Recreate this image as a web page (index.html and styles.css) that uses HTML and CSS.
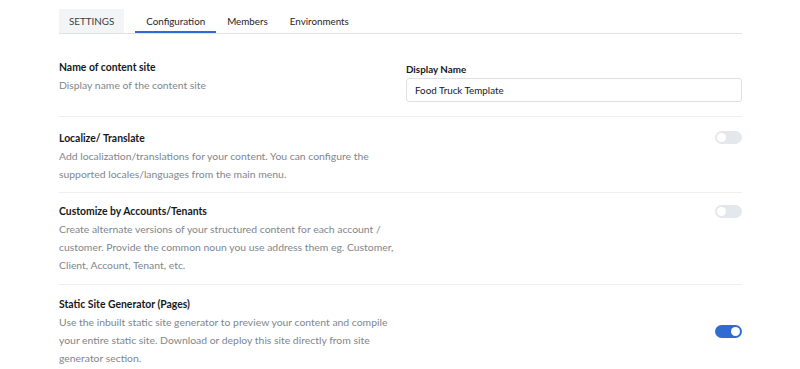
FILE: index.html
```html
<!DOCTYPE html>
<html>
  <head>
    <title>Settings</title>
    <link rel="stylesheet" href="styles.css">
  </head>
  <body>
    <div class="container">
      <div class="tabs">
        <div class="tab-label">SETTINGS</div>
        <div class="tab active">Configuration</div>
        <div class="tab">Members</div>
        <div class="tab">Environments</div>
      </div>

      <div class="setting first">
        <div class="setting-text">
          <div class="setting-title">Name of content site</div>
          <div class="setting-desc">Display name of the content site</div>
        </div>
        <div class="field">
          <label class="field-label">Display Name</label>
          <input type="text" class="field-input" value="Food Truck Template" />
        </div>
      </div>

      <div class="setting spaced">
        <div class="setting-text">
          <div class="setting-title">Localize/ Translate</div>
          <div class="setting-desc">
            Add localization/translations for your content. You can configure the
            supported locales/languages from the main menu.
          </div>
        </div>
        <div class="switch"></div>
      </div>

      <div class="setting">
        <div class="setting-text">
          <div class="setting-title">Customize by Accounts/Tenants</div>
          <div class="setting-desc">
            Create alternate versions of your structured content for each account /
            customer. Provide the common noun you use address them eg. Customer,
            Client, Account, Tenant, etc.
          </div>
        </div>
        <div class="switch"></div>
      </div>

      <div class="setting last">
        <div class="setting-text">
          <div class="setting-title">Static Site Generator (Pages)</div>
          <div class="setting-desc">
            Use the inbuilt static site generator to preview your content and compile
            your entire static site. Download or deploy this site directly from site
            generator section.
          </div>
        </div>
        <div class="switch on"></div>
      </div>
    </div>
  </body>
</html>
```

FILE: styles.css
```css
body {
  font-family: Lato, "Open Sans", Arial, sans-serif;
  background-color: #fff;
  margin: 0;
  padding: 0;
}
.container {
  width: 683px;
  margin-left: 59px;
}
.tabs {
  display: flex;
  margin-top: 9px;
  border-bottom: 1px solid #dfe3e8;
  font-size: 9.8px;
  color: #1f2328;
}
.tab-label {
  padding: 0 10px;
  height: 24px;
  line-height: 24px;
  background-color: #f3f4f6;
  color: #3a3f45;
  margin-right: 11px;
}
.tab {
  padding: 0 11px;
  height: 24px;
  line-height: 24px;
}
.tab.active {
  box-shadow: inset 0 -2px 0 #2f6bd0;
}
.setting {
  display: flex;
  align-items: flex-start;
  justify-content: space-between;
  padding: 10px 0 10px;
  border-bottom: 1px solid #eceef1;
}
.setting .switch {
  margin-top: 2px;
}
.setting.first {
  margin-top: 13px;
  padding-top: 12px;
  padding-bottom: 14px;
}
.setting.spaced {
  padding-top: 13px;
  padding-bottom: 9px;
}
.setting.spaced .switch {
  margin-top: 1px;
}
.setting.last {
  align-items: center;
  padding-top: 11px;
  border-bottom: none;
}
.setting.last .switch {
  margin-top: 0;
}
.setting-text {
  width: 338px;
}
.setting-title {
  font-size: 10.4px;
  font-weight: 700;
  line-height: 17px;
  color: #15191e;
}
.setting-desc {
  font-size: 10.4px;
  line-height: 18px;
  color: #80868d;
}
.field {
  width: 336px;
  padding-top: 2px;
}
.field-label {
  display: block;
  font-size: 9.8px;
  font-weight: 700;
  line-height: 16px;
  color: #15191e;
}
.field-input {
  box-sizing: border-box;
  width: 100%;
  height: 24px;
  margin-top: 1px;
  padding: 0 8px;
  border: 1px solid #dcdfe3;
  border-radius: 3px;
  font-family: inherit;
  font-size: 9.8px;
  color: #15191e;
}
.switch {
  position: relative;
  width: 27px;
  height: 13px;
  border-radius: 7px;
  background-color: #e4e7eb;
  flex-shrink: 0;
}
.switch::after {
  content: "";
  position: absolute;
  top: 2px;
  left: 2px;
  width: 9px;
  height: 9px;
  border-radius: 50%;
  background-color: #fff;
}
.switch.on {
  background-color: #2f6bd0;
}
.switch.on::after {
  left: 16px;
}
```
